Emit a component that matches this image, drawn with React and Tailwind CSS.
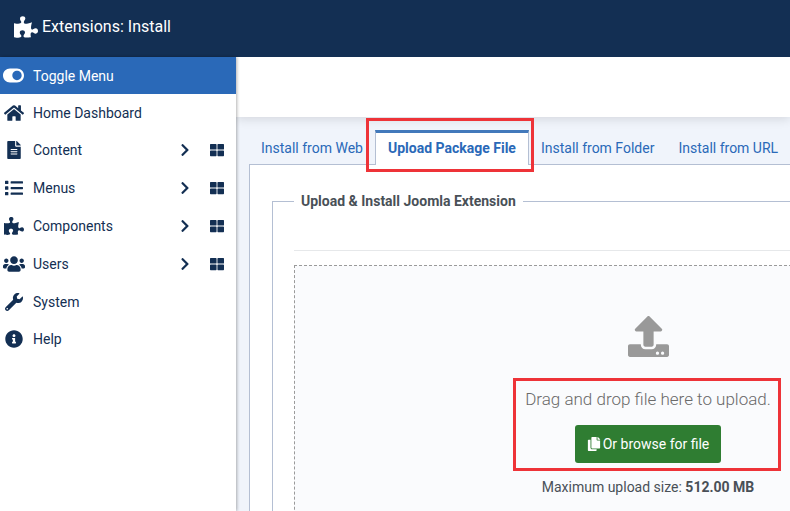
import {
  FaChevronRight, FaCopy, FaFileAlt, FaHome, FaInfoCircle, FaList,
  FaPuzzlePiece, FaThLarge, FaToggleOn, FaUpload, FaUsers, FaWrench,
} from 'react-icons/fa';

const menu = [
  { label: 'Home Dashboard', icon: FaHome, size: 'size-5' },
  { label: 'Content', icon: FaFileAlt, size: 'size-[18px]', sub: true },
  { label: 'Menus', icon: FaList, size: 'size-[18px]', sub: true },
  { label: 'Components', icon: FaPuzzlePiece, size: 'size-5', sub: true },
  { label: 'Users', icon: FaUsers, size: 'size-[22px]', sub: true },
  { label: 'System', icon: FaWrench, size: 'size-[18px]' },
  { label: 'Help', icon: FaInfoCircle, size: 'size-[18px]' },
];

const tabs = ['Install from Web', 'Upload Package File', 'Install from Folder', 'Install from URL'];

function MenuRow({ label, icon: Icon, size, sub }) {
  return (
    <li className={`flex items-center pr-3 ${sub ? 'h-[38px]' : 'h-[37px]'}`}>
      <a href="#" className="flex flex-1 items-center">
        <span className="flex w-[27px] justify-center">
          <Icon className={size} />
        </span>
        <span className="ml-1.5">{label}</span>
      </a>
      {sub && (
        <>
          <button type="button" aria-label={`Expand ${label}`} className="mr-[18px]">
            <FaChevronRight className="size-[14px]" />
          </button>
          <a href="#" aria-label={`${label} Dashboard`}>
            <FaThLarge className="size-[14px]" />
          </a>
        </>
      )}
    </li>
  );
}

function Sidebar() {
  return (
    <nav className="relative z-10 w-[236px] shrink-0 bg-white text-[#132f53] shadow-[1px_0_3px_#0000004d]">
      <button type="button" className="flex h-[37px] w-full items-center bg-[#2a69b8] text-white">
        <span className="flex w-[27px] justify-center">
          <FaToggleOn className="size-[21px]" />
        </span>
        <span className="ml-1.5">Toggle Menu</span>
      </button>
      <ul>
        {menu.map((item) => (
          <MenuRow key={item.label} {...item} />
        ))}
      </ul>
    </nav>
  );
}

function Tabs() {
  return (
    <div role="tablist" className="flex h-[34px] items-stretch">
      {tabs.map((tab, i) =>
        i === 1 ? (
          <button
            key={tab}
            type="button"
            role="tab"
            aria-selected="true"
            className="relative -mb-px border-x border-t-3 border-x-[#b4bfd3] border-t-[#4279bb] bg-white px-3 pb-0.5 font-bold whitespace-nowrap text-[#2a69b8]"
          >
            {tab}
            <span className="pointer-events-none absolute -top-[15px] -right-1.5 -bottom-[7px] -left-2.5 border-[3px] border-[#ee3338]" />
          </button>
        ) : (
          <button key={tab} type="button" role="tab" aria-selected="false" className="px-3 pt-0.5 whitespace-nowrap text-[#2a69b8]">
            {tab}
          </button>
        ),
      )}
    </div>
  );
}

function DropZone() {
  return (
    <div className="flex h-[280px] flex-col items-center border border-dashed border-[#9a9a9a] bg-[#fafbfd] pt-[50px]">
      <FaUpload className="size-[41px] text-[#999999]" />
      <div className="relative mt-[21px] flex flex-col items-center pt-1.5 pb-2">
        <p className="text-[17px] leading-[30px] font-light text-[#6a6a6a]">Drag and drop file here to upload.</p>
        <button type="button" className="mt-[11px] flex h-[38px] items-center gap-0.5 rounded-[3px] bg-[#2f7d32] px-3 text-white">
          <FaCopy className="size-[14px]" />
          Or browse for file
        </button>
        <span className="pointer-events-none absolute inset-y-0 -right-2.5 -left-3 border-[3px] border-[#ee3338]" />
      </div>
      <p className="mt-1.5 leading-5">
        Maximum upload size: <strong>512.00 MB</strong>
      </p>
    </div>
  );
}

export default function App() {
  return (
    <div className="flex h-screen flex-col overflow-hidden bg-[#f0f4fb] font-[Roboto,sans-serif] text-sm text-[#495057]">
      <header className="flex h-[57px] shrink-0 items-center gap-1 bg-[#132f53] pb-1 pl-[14px] text-white">
        <FaPuzzlePiece className="size-6" />
        <h1 className="text-base">Extensions: Install</h1>
      </header>
      <div className="flex min-h-0 flex-1">
        <Sidebar />
        <main className="min-w-0 flex-1 overflow-hidden">
          <div className="h-[60px] bg-white shadow-[0_2px_10px_#0000001f]" />
          <div className="min-w-[824px] px-[13px] pt-[13px]">
            <Tabs />
            <section className="border border-[#b4bfd3] bg-white px-[22px] pt-[25px] pb-6">
              <fieldset className="border border-[#b4bfd3] px-[21px] pb-6">
                <legend className="px-[7px] leading-[22px] font-bold">Upload &amp; Install Joomla Extension</legend>
                <hr className="mt-[38px] mb-[14px] border-[#e6e8ea]" />
                <DropZone />
              </fieldset>
            </section>
          </div>
        </main>
      </div>
    </div>
  );
}
